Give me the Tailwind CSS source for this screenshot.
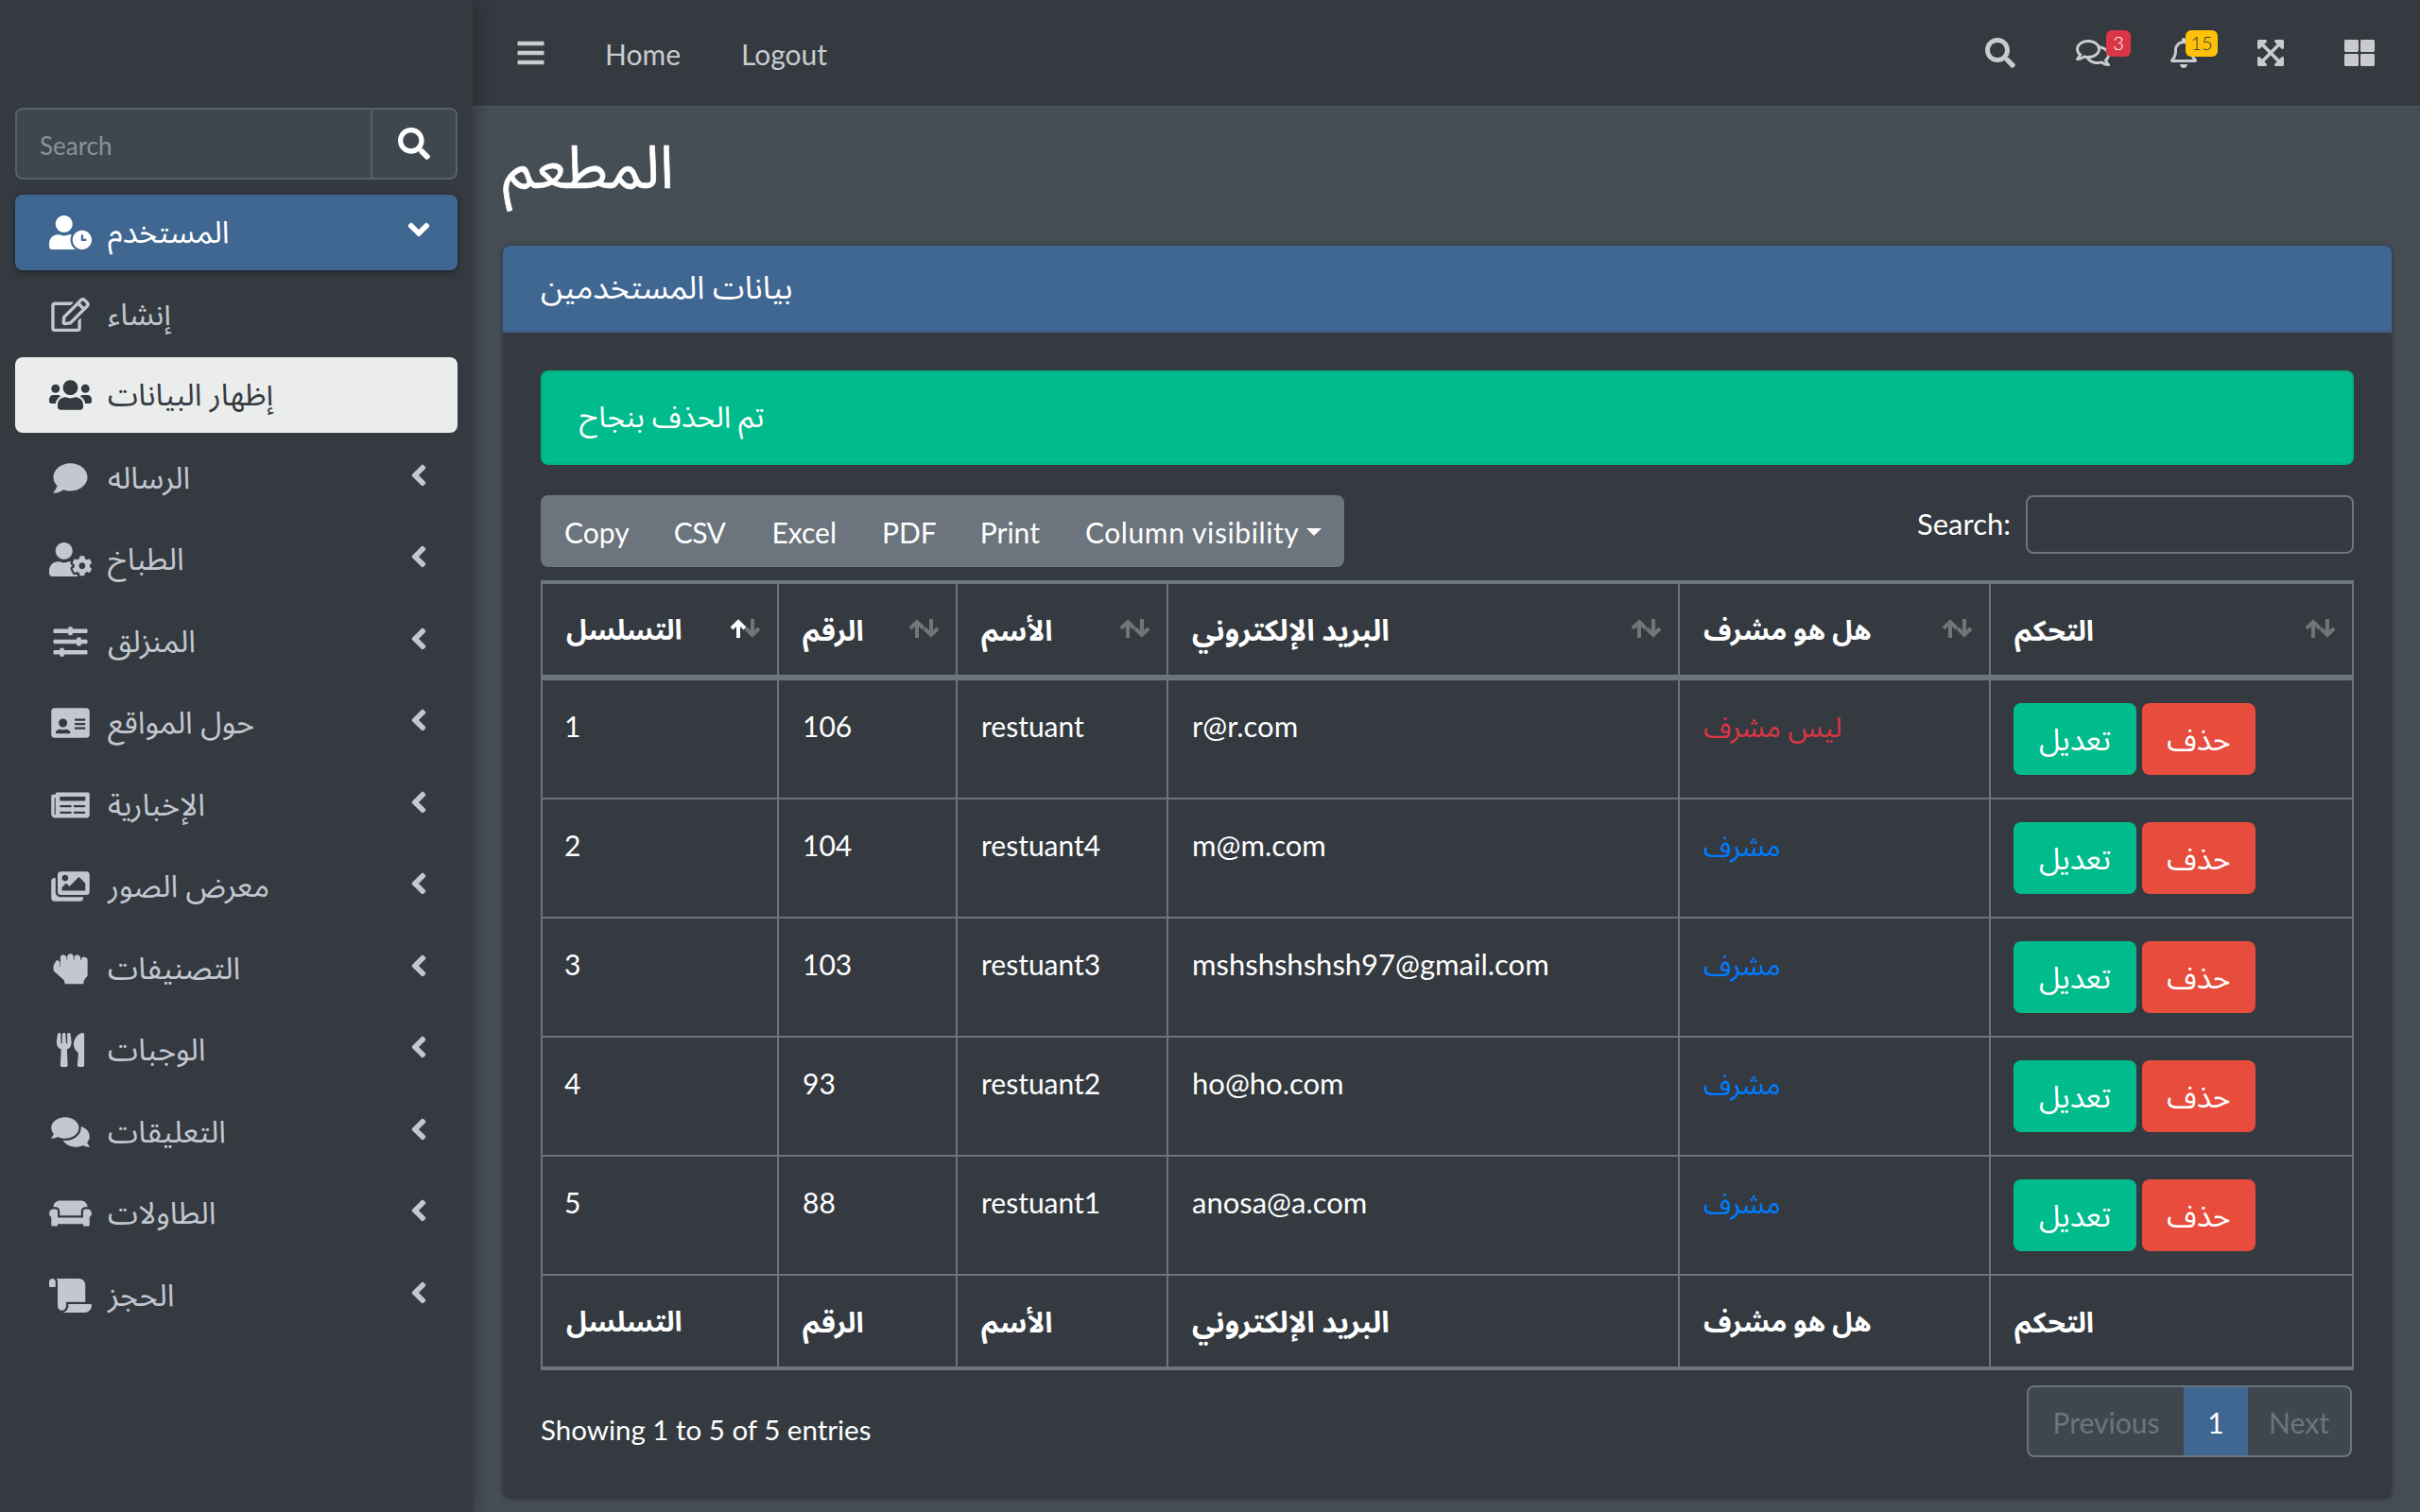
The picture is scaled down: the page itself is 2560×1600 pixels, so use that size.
<!DOCTYPE html>
<html lang="ar">
<head>
  <meta charset="UTF-8" />
  <title>المطعم</title>
  <script src="https://cdn.jsdelivr.net/npm/@tailwindcss/browser@4"></script>
</head>
<body class="w-[2560px] h-[1600px] overflow-hidden flex bg-[#454d55] text-white text-[30px] leading-[48px] font-['Lato','Noto_Sans_Arabic','DejaVu_Sans',sans-serif]">
  <svg class="hidden">
    <symbol id="i-search" viewBox="0 0 512 512"><path fill="currentColor" d="M505 442.7L405.3 343c-4.5-4.5-10.6-7-17-7H372c27.6-35.3 44-79.7 44-128C416 93.1 322.9 0 208 0S0 93.1 0 208s93.1 208 208 208c48.3 0 92.7-16.4 128-44v16.3c0 6.4 2.5 12.5 7 17l99.7 99.7c9.4 9.4 24.6 9.4 33.9 0l28.3-28.3c9.4-9.4 9.4-24.6.1-34zM208 336c-70.7 0-128-57.2-128-128 0-70.7 57.2-128 128-128 70.7 0 128 57.2 128 128 0 70.7-57.2 128-128 128z"/></symbol>
    <symbol id="i-angle" viewBox="0 0 256 512"><path fill="currentColor" d="M31.7 239l136-136c9.4-9.4 24.6-9.4 33.9 0l22.6 22.6c9.4 9.4 9.4 24.6 0 33.9L127.9 256l96.4 96.4c9.4 9.4 9.4 24.6 0 33.9L201.7 409c-9.4 9.4-24.6 9.4-33.9 0l-136-136c-9.5-9.4-9.5-24.6-.1-34z"/></symbol>
    <symbol id="i-sort" viewBox="0 0 34 20"><g fill="none" stroke="currentColor" stroke-width="4"><path d="M9 20V3M2 10l7-7 7 7"/><path d="M24 0v17M17 10l7 7 7-7"/></g></symbol>
  </svg>

  <!-- Sidebar -->
  <aside class="w-[500px] h-full shrink-0 bg-[#343a40] px-4 pt-[114px] text-[#c2c7d0] shadow-[0_0_20px_rgba(0,0,0,0.35)] z-10">
    <div class="flex h-[76px] rounded-lg border-2 border-[#56606a] bg-[#3f474e] mb-4 overflow-hidden">
      <div class="flex-1 pl-[24px] text-[26px] leading-[76px] text-[#8b9299]">Search</div>
      <div class="w-[90px] border-l-2 border-[#56606a] flex items-center justify-center text-white">
        <svg class="w-[34px] h-[34px]"><use href="#i-search"/></svg>
      </div>
    </div>
    <nav class="flex flex-col gap-[6.5px] text-[32.5px] [&_span]:-translate-y-[1px]">
      <a class="flex items-center h-[80px] px-[36px] rounded-lg bg-[#3f6791] text-white shadow-[0_2px_6px_rgba(0,0,0,0.4)]">
        <svg class="w-[45px] h-[36px] shrink-0" viewBox="0 0 640 512"><path fill="currentColor" d="M496 224c-79.6 0-144 64.4-144 144s64.4 144 144 144 144-64.4 144-144-64.4-144-144-144zm64 150.3c0 5.3-4.4 9.7-9.7 9.7h-60.6c-5.3 0-9.7-4.4-9.7-9.7v-76.6c0-5.3 4.4-9.7 9.7-9.7h12.6c5.3 0 9.7 4.4 9.7 9.7V352h38.3c5.3 0 9.7 4.4 9.7 9.7v12.6zM320 368c0-27.8 6.7-54.1 18.2-77.5-8-1.5-16.2-2.5-24.6-2.5h-16.7c-22.2 10.2-46.9 16-72.9 16s-50.6-5.8-72.9-16h-16.7C60.2 288 0 348.2 0 422.4V464c0 26.5 21.5 48 48 48h347.1c-45.3-31.9-75.1-84.5-75.1-144zm-96-112c70.7 0 128-57.3 128-128S294.7 0 224 0 96 57.3 96 128s57.3 128 128 128z"/></svg>
        <span class="ml-[17px]">المستخدم</span>
        <svg class="ml-auto -mr-[4px] w-[18px] h-[36px] -rotate-90 -translate-y-[3px]"><use href="#i-angle"/></svg>
      </a>
      <a class="flex items-center h-[80px] px-[36px]">
        <svg class="w-[45px] h-[36px] shrink-0" viewBox="0 0 576 512"><path fill="currentColor" d="M402.300 344.900l32-32c5-5 13.700-1.500 13.700 5.700V464c0 26.500-21.500 48-48 48H48c-26.500 0-48-21.500-48-48V112c0-26.500 21.500-48 48-48h273.500c7.100 0 10.700 8.600 5.700 13.700l-32 32c-1.500 1.500-3.500 2.300-5.700 2.300H48v352h352V350.500c0-2.100.8-4.100 2.300-5.600zm156.600-201.800L296.300 405.700l-90.400 10c-26.200 2.900-48.500-19.200-45.600-45.600l10-90.400L432.900 17.100c22.900-22.900 59.900-22.900 82.700 0l43.200 43.200c22.900 22.900 22.900 60 .1 82.800zM460.100 174L402 115.900 216.200 301.800l-7.300 65.300 65.300-7.300L460.100 174zm64.800-79.700l-43.200-43.200c-4.100-4.100-10.800-4.100-14.800 0L436 82l58.100 58.100 30.900-30.900c4-4.200 4-10.800-.1-14.900z"/></svg>
        <span class="ml-[17px]">إنشاء</span>
      </a>
      <a class="flex items-center h-[80px] px-[36px] rounded-lg bg-[#ebecec] text-[#343a40] -translate-y-[1px]">
        <svg class="w-[45px] h-[36px] shrink-0" viewBox="0 0 640 512"><path fill="currentColor" d="M96 224c35.3 0 64-28.7 64-64s-28.7-64-64-64-64 28.7-64 64 28.7 64 64 64zm448 0c35.3 0 64-28.7 64-64s-28.7-64-64-64-64 28.7-64 64 28.7 64 64 64zm32 32h-64c-17.6 0-33.5 7.1-45.1 18.6 40.3 22.1 68.9 62 75.1 109.4h66c17.7 0 32-14.3 32-32v-32c0-35.3-28.7-64-64-64zm-256 0c61.9 0 112-50.1 112-112S381.9 32 320 32 208 82.1 208 144s50.1 112 112 112zm76.8 32h-8.3c-20.8 10-43.9 16-68.5 16s-47.6-6-68.5-16h-8.3C179.6 288 128 339.6 128 403.2V432c0 26.5 21.5 48 48 48h288c26.5 0 48-21.5 48-48v-28.8c0-63.6-51.6-115.2-115.2-115.2zm-223.7-13.4C161.5 263.1 145.6 256 128 256H64c-35.3 0-64 28.7-64 64v32c0 17.7 14.3 32 32 32h65.9c6.3-47.4 34.9-87.3 75.2-109.4z"/></svg>
        <span class="ml-[17px]">إظهار البيانات</span>
      </a>
      <a class="flex items-center h-[80px] px-[36px]">
        <svg class="w-[45px] h-[36px] shrink-0" viewBox="0 0 512 512"><path fill="currentColor" d="M256 32C114.6 32 0 125.1 0 240c0 49.6 21.4 95 57 130.7C44.5 421.1 2.7 466 2.2 466.5c-2.2 2.3-2.8 5.7-1.5 8.7S4.8 480 8 480c66.3 0 116-31.8 140.6-51.4 32.7 12.3 69 19.4 107.4 19.4 141.4 0 256-93.1 256-208S397.4 32 256 32z"/></svg>
        <span class="ml-[17px]">الرساله</span>
        <svg class="ml-auto -mr-[4px] w-[18px] h-[36px] -translate-y-[3px]"><use href="#i-angle"/></svg>
      </a>
      <a class="flex items-center h-[80px] px-[36px]">
        <svg class="w-[45px] h-[36px] shrink-0" viewBox="0 0 640 512"><path fill="currentColor" d="M610.5 373.3c2.6-14.1 2.6-28.5 0-42.6l25.8-14.9c3-1.7 4.3-5.2 3.3-8.5-6.7-21.6-18.2-41.2-33.2-57.4-2.3-2.5-6-3.1-9-1.4l-25.8 14.9c-10.9-9.3-23.4-16.5-36.9-21.3v-29.8c0-3.4-2.4-6.4-5.7-7.1-22.3-5-45-4.8-66.2 0-3.3.7-5.7 3.7-5.7 7.1v29.8c-13.5 4.8-26 12-36.9 21.3l-25.8-14.9c-2.9-1.7-6.7-1.1-9 1.4-15 16.2-26.5 35.8-33.2 57.4-1 3.3.4 6.8 3.3 8.5l25.8 14.9c-2.6 14.1-2.6 28.5 0 42.6l-25.8 14.9c-3 1.7-4.3 5.2-3.3 8.5 6.7 21.6 18.2 41.1 33.2 57.4 2.3 2.5 6 3.1 9 1.4l25.8-14.9c10.9 9.3 23.4 16.5 36.9 21.3v29.8c0 3.4 2.4 6.4 5.7 7.1 22.3 5 45 4.8 66.2 0 3.3-.7 5.7-3.7 5.7-7.1v-29.8c13.5-4.8 26-12 36.9-21.3l25.8 14.9c2.9 1.7 6.7 1.1 9-1.4 15-16.2 26.5-35.8 33.2-57.4 1-3.3-.4-6.8-3.3-8.5l-25.8-14.9zM496 400.5c-26.8 0-48.5-21.8-48.5-48.5s21.8-48.5 48.5-48.5 48.5 21.8 48.5 48.5-21.7 48.5-48.5 48.5zM224 256c70.7 0 128-57.3 128-128S294.7 0 224 0 96 57.3 96 128s57.3 128 128 128zm201.2 226.5c-2.3-1.2-4.6-2.6-6.8-3.9l-7.9 4.6c-6 3.4-12.8 5.3-19.6 5.3-10.9 0-21.4-4.6-28.9-12.6-18.3-19.8-32.3-43.9-40.2-69.6-5.5-17.7 1.9-36.4 17.9-45.7l7.9-4.6c-.1-2.6-.1-5.2 0-7.8l-7.9-4.6c-16-9.2-23.4-28-17.9-45.7.9-2.9 2.2-5.8 3.2-8.7-3.8-.3-7.5-1.2-11.4-1.2h-16.7c-22.2 10.2-46.9 16-72.9 16s-50.6-5.8-72.9-16h-16.7C60.2 288 0 348.2 0 422.4V464c0 26.5 21.5 48 48 48h352c10.1 0 19.5-3.2 27.2-8.5-1.2-3.8-2-7.7-2-11.8v-9.2z"/></svg>
        <span class="ml-[17px]">الطباخ</span>
        <svg class="ml-auto -mr-[4px] w-[18px] h-[36px] -translate-y-[3px]"><use href="#i-angle"/></svg>
      </a>
      <a class="flex items-center h-[80px] px-[36px]">
        <svg class="w-[45px] h-[36px] shrink-0" viewBox="0 0 512 512"><path fill="currentColor" d="M496 384H160v-16c0-8.8-7.2-16-16-16h-32c-8.8 0-16 7.2-16 16v16H16c-8.8 0-16 7.2-16 16v32c0 8.8 7.2 16 16 16h80v16c0 8.8 7.2 16 16 16h32c8.8 0 16-7.2 16-16v-16h336c8.8 0 16-7.2 16-16v-32c0-8.8-7.2-16-16-16zm0-160h-80v-16c0-8.8-7.2-16-16-16h-32c-8.8 0-16 7.2-16 16v16H16c-8.8 0-16 7.2-16 16v32c0 8.8 7.2 16 16 16h336v16c0 8.8 7.2 16 16 16h32c8.8 0 16-7.2 16-16v-16h80c8.8 0 16-7.2 16-16v-32c0-8.8-7.2-16-16-16zm0-160H288V48c0-8.8-7.2-16-16-16h-32c-8.8 0-16 7.2-16 16v16H16C7.2 64 0 71.2 0 80v32c0 8.8 7.2 16 16 16h208v16c0 8.8 7.2 16 16 16h32c8.8 0 16-7.2 16-16v-16h208c8.8 0 16-7.2 16-16V80c0-8.8-7.2-16-16-16z"/></svg>
        <span class="ml-[17px]">المنزلق</span>
        <svg class="ml-auto -mr-[4px] w-[18px] h-[36px] -translate-y-[3px]"><use href="#i-angle"/></svg>
      </a>
      <a class="flex items-center h-[80px] px-[36px]">
        <svg class="w-[45px] h-[36px] shrink-0" viewBox="0 0 576 512"><path fill="currentColor" fill-rule="evenodd" d="M48 32h480c26.5 0 48 21.500 48 48v352c0 26.5-21.5 48-48 48H48c-26.5 0-48-21.5-48-48V80c0-26.500 21.500-48 48-48zM352 200c0-4.400 3.600-8 8-8h144c4.400 0 8 3.600 8 8v16c0 4.400-3.600 8-8 8H360c-4.400 0-8-3.600-8-8v-16zm0 64c0-4.400 3.600-8 8-8h144c4.400 0 8 3.600 8 8v16c0 4.400-3.600 8-8 8H360c-4.400 0-8-3.600-8-8v-16zm0 64c0-4.400 3.600-8 8-8h144c4.400 0 8 3.600 8 8v16c0 4.400-3.600 8-8 8H360c-4.400 0-8-3.600-8-8v-16zM176 192c35.300 0 64 28.700 64 64s-28.700 64-64 64-64-28.700-64-64 28.700-64 64-64zM67.100 396.200C75.500 370.500 99.600 352 128 352h8.200c12.300 5.100 25.700 8 39.800 8s27.600-2.900 39.800-8h8.200c28.400 0 52.500 18.500 60.900 44.200 3.200 9.900-5.200 19.800-15.600 19.800H82.700c-10.400 0-18.800-10-15.600-19.800z"/></svg>
        <span class="ml-[17px]">حول المواقع</span>
        <svg class="ml-auto -mr-[4px] w-[18px] h-[36px] -translate-y-[3px]"><use href="#i-angle"/></svg>
      </a>
      <a class="flex items-center h-[80px] px-[36px]">
        <svg class="w-[45px] h-[36px] shrink-0" viewBox="0 0 576 512"><path fill="currentColor" d="M552 64H88c-13.255 0-24 10.745-24 24v8H24c-13.255 0-24 10.745-24 24v272c0 30.928 25.072 56 56 56h472c26.51 0 48-21.49 48-48V88c0-13.255-10.745-24-24-24zM56 400a8 8 0 0 1-8-8V144h16v248a8 8 0 0 1-8 8zm236-16H140c-6.627 0-12-5.373-12-12v-8c0-6.627 5.373-12 12-12h152c6.627 0 12 5.373 12 12v8c0 6.627-5.373 12-12 12zm208 0H348c-6.627 0-12-5.373-12-12v-8c0-6.627 5.373-12 12-12h152c6.627 0 12 5.373 12 12v8c0 6.627-5.373 12-12 12zm-208-96H140c-6.627 0-12-5.373-12-12v-8c0-6.627 5.373-12 12-12h152c6.627 0 12 5.373 12 12v8c0 6.627-5.373 12-12 12zm208 0H348c-6.627 0-12-5.373-12-12v-8c0-6.627 5.373-12 12-12h152c6.627 0 12 5.373 12 12v8c0 6.627-5.373 12-12 12zm0-96H140c-6.627 0-12-5.373-12-12v-40c0-6.627 5.373-12 12-12h360c6.627 0 12 5.373 12 12v40c0 6.627-5.373 12-12 12z"/></svg>
        <span class="ml-[17px]">الإخبارية</span>
        <svg class="ml-auto -mr-[4px] w-[18px] h-[36px] -translate-y-[3px]"><use href="#i-angle"/></svg>
      </a>
      <a class="flex items-center h-[80px] px-[36px]">
        <svg class="w-[45px] h-[36px] shrink-0" viewBox="0 0 576 512"><path fill="currentColor" d="M480 416v16c0 26.51-21.49 48-48 48H48c-26.51 0-48-21.49-48-48V176c0-26.51 21.49-48 48-48h16v208c0 44.112 35.888 80 80 80h336zm96-80V80c0-26.51-21.49-48-48-48H144c-26.51 0-48 21.49-48 48v256c0 26.51 21.49 48 48 48h384c26.51 0 48-21.49 48-48zM256 128c0 26.51-21.49 48-48 48s-48-21.49-48-48 21.49-48 48-48 48 21.49 48 48zm-96 144l55.515-55.515c4.686-4.686 12.284-4.686 16.971 0L272 256l135.515-135.515c4.686-4.686 12.284-4.686 16.971 0L512 208v112H160v-48z"/></svg>
        <span class="ml-[17px]">معرض الصور</span>
        <svg class="ml-auto -mr-[4px] w-[18px] h-[36px] -translate-y-[3px]"><use href="#i-angle"/></svg>
      </a>
      <a class="flex items-center h-[80px] px-[36px]">
        <svg class="w-[45px] h-[36px] shrink-0" viewBox="0 0 512 512"><path fill="currentColor" d="M464.8 80c-26.9-.4-48.8 21.2-48.8 48h-8V96.8c0-26.300-20.900-48.300-47.200-48.800-26.900-.4-48.800 21.200-48.800 48v32h-8V80.800c0-26.300-20.900-48.300-47.200-48.800-26.900-.4-48.800 21.200-48.800 48v48h-8V96.800c0-26.300-20.900-48.300-47.200-48.800-26.900-.4-48.800 21.200-48.800 48v136l-8-7.100v-48.100c0-26.300-20.900-48.300-47.200-48.800C21.900 175.600 0 197.200 0 224v41.700c0 13.700 5.900 26.800 16.100 35.900l135.800 120.700C163.300 432.400 168 445 168 458v6c0 13.300 10.700 24 24 24h240c13.300 0 24-10.700 24-24v-8.300c0-12.900 4.600-25.400 12.800-35.400l34.500-42c7-8.600 10.700-19.400 10.700-30.500V128.800c0-26.300-20.900-48.300-47.200-48.800z"/></svg>
        <span class="ml-[17px]">التصنيفات</span>
        <svg class="ml-auto -mr-[4px] w-[18px] h-[36px] -translate-y-[3px]"><use href="#i-angle"/></svg>
      </a>
      <a class="flex items-center h-[80px] px-[36px]">
        <svg class="w-[45px] h-[36px] shrink-0" viewBox="0 0 416 512"><path fill="currentColor" d="M207.900 15.200c.8 4.700 16.100 94.500 16.100 128.800 0 52.300-27.800 89.600-68.900 104.600L168 486.700c.7 13.700-10.200 25.300-24 25.300H80c-13.700 0-24.700-11.500-24-25.300l12.900-238.100C27.700 233.600 0 196.200 0 144 0 109.600 15.300 19.900 16.100 15.200 19.300-5.100 61.400-5.400 64 16.300v141.200c1.300 3.400 15.100 3.200 16 0 1.400-25.300 7.900-139.200 8-141.800 3.300-20.800 44.700-20.800 47.900 0 .2 2.700 6.600 116.500 8 141.800.9 3.200 14.800 3.400 16 0V16.300c2.600-21.600 44.800-21.400 48-1.100zm119.200 285.700l-15 185.100c-1.200 14 9.900 26 23.900 26h56c13.300 0 24-10.700 24-24V24c0-13.200-10.700-24-24-24-82.500 0-221.400 178.500-64.900 300.900z"/></svg>
        <span class="ml-[17px]">الوجبات</span>
        <svg class="ml-auto -mr-[4px] w-[18px] h-[36px] -translate-y-[3px]"><use href="#i-angle"/></svg>
      </a>
      <a class="flex items-center h-[80px] px-[36px]">
        <svg class="w-[45px] h-[36px] shrink-0" viewBox="0 0 576 512"><path fill="currentColor" d="M416 192c0-88.400-93.100-160-208-160S0 103.600 0 192c0 34.300 14.100 65.900 38 92-13.400 30.200-35.500 54.200-35.800 54.500-2.200 2.300-2.800 5.700-1.500 8.700S4.800 352 8 352c36.600 0 66.900-12.300 88.700-25 32.200 15.700 70.300 25 111.300 25 114.900 0 208-71.600 208-160zm122 220c23.900-26 38-57.700 38-92 0-66.900-53.500-124.200-129.300-148.100.9 6.600 1.300 13.300 1.300 20.100 0 105.900-107.700 192-240 192-10.800 0-21.300-.8-31.700-1.900C207.800 439.600 281.800 480 368 480c41 0 79.100-9.200 111.300-25 21.800 12.700 52.100 25 88.700 25 3.200 0 6.100-1.900 7.300-4.800 1.300-2.900.7-6.300-1.500-8.700-.3-.3-22.400-24.200-35.800-54.500z"/></svg>
        <span class="ml-[17px]">التعليقات</span>
        <svg class="ml-auto -mr-[4px] w-[18px] h-[36px] -translate-y-[3px]"><use href="#i-angle"/></svg>
      </a>
      <a class="flex items-center h-[80px] px-[36px]">
        <svg class="w-[45px] h-[36px] shrink-0" viewBox="0 0 640 512"><path fill="currentColor" d="M160 224v64h320v-64c0-35.300 28.700-64 64-64h32c0-53-43-96-96-96H160c-53 0-96 43-96 96h32c35.300 0 64 28.700 64 64zm416-32h-32c-17.700 0-32 14.300-32 32v96H128v-96c0-17.700-14.300-32-32-32H64c-35.300 0-64 28.700-64 64 0 23.600 13 44 32 55.100V432c0 8.800 7.200 16 16 16h64c8.800 0 16-7.200 16-16v-16h384v16c0 8.800 7.200 16 16 16h64c8.800 0 16-7.200 16-16V311.100c19-11.100 32-31.500 32-55.100 0-35.300-28.700-64-64-64z"/></svg>
        <span class="ml-[17px]">الطاولات</span>
        <svg class="ml-auto -mr-[4px] w-[18px] h-[36px] -translate-y-[3px]"><use href="#i-angle"/></svg>
      </a>
      <a class="flex items-center h-[80px] px-[36px]">
        <svg class="w-[45px] h-[36px] shrink-0" viewBox="0 0 640 512"><path fill="currentColor" d="M48 0C21.530 0 0 21.530 0 48v64c0 8.840 7.160 16 16 16h80V48C96 21.530 74.470 0 48 0zm208 412.570V352h288V96c0-52.940-43.060-96-96-96H111.590C121.740 13.410 128 29.920 128 48v368c0 38.870 34.650 69.650 74.750 63.120C234.220 474 256 445.040 256 413.100zM288 384v32c0 52.930-43.060 96-96 96h336c61.860 0 112-50.140 112-112 0-8.840-7.160-16-16-16H288z"/></svg>
        <span class="ml-[17px]">الحجز</span>
        <svg class="ml-auto -mr-[4px] w-[18px] h-[36px] -translate-y-[3px]"><use href="#i-angle"/></svg>
      </a>
    </nav>
  </aside>

  <div class="flex-1 flex flex-col min-w-0">
    <!-- Top navbar -->
    <header class="h-[114px] shrink-0 flex items-center bg-[#343a40] border-b-2 border-[#4b545c] pl-[47px] pr-[48px] text-[#c9cbce]">
      <svg class="w-[29px] h-[32px]" viewBox="0 0 448 512"><path fill="currentColor" d="M16 132h416c8.837 0 16-7.163 16-16V76c0-8.837-7.163-16-16-16H16C7.163 60 0 67.163 0 76v40c0 8.837 7.163 16 16 16zm0 160h416c8.837 0 16-7.163 16-16v-40c0-8.837-7.163-16-16-16H16c-8.837 0-16 7.163-16 16v40c0 8.837 7.163 16 16 16zm0 160h416c8.837 0 16-7.163 16-16v-40c0-8.837-7.163-16-16-16H16c-8.837 0-16 7.163-16 16v40c0 8.837 7.163 16 16 16z"/></svg>
      <a class="ml-[64px] pt-[2px]">Home</a>
      <a class="ml-[64px] pt-[2px]">Logout</a>
      <div class="ml-auto flex items-center">
        <svg class="w-[32px] h-[32px]"><use href="#i-search"/></svg>
        <div class="relative ml-[64px]">
          <svg class="block w-[36px] h-[32px]" viewBox="0 0 576 512"><path fill="currentColor" d="M532 386.200c27.500-27.100 44-61.100 44-98.200 0-80-76.500-146.100-176.200-157.900C368.300 72.500 294.300 32 208 32 93.100 32 0 103.600 0 192c0 37 16.500 71 44 98.200-15.300 30.700-37.300 54.500-37.700 54.900-6.300 6.700-8.100 16.500-4.400 25 3.600 8.500 12 14 21.200 14 53.500 0 96.700-20.200 125.200-38.800 9.200 2.100 18.700 3.700 28.400 4.900C208.100 407.600 281.800 448 368 448c20.800 0 40.800-2.400 59.800-6.800C456.300 459.700 499.400 480 553 480c9.200 0 17.500-5.500 21.200-14 3.600-8.500 1.900-18.300-4.400-25-.4-.3-22.500-24.100-37.800-54.800zm-392.800-92.300L122.100 305c-14.100 9.100-28.500 16.300-43.100 21.400 2.700-4.700 5.400-9.700 8-14.800l15.500-31.100L77.700 256C64.200 242.600 48 220.700 48 192c0-60.700 73.300-112 160-112s160 51.300 160 112-73.300 112-160 112c-16.500 0-33-1.900-49-5.600l-19.800-4.500zM498.300 352l-24.700 24.400 15.500 31.100c2.600 5.100 5.300 10.100 8 14.800-14.600-5.100-29-12.300-43.100-21.400l-17.100-11.100-19.900 4.600c-16 3.700-32.500 5.600-49 5.600-54 0-102.200-20.100-131.300-49.700C338 339.500 416 272.900 416 192c0-3.400-.4-6.700-.7-10C479.700 196.500 528 238.800 528 288c0 28.700-16.200 50.600-29.700 64z"/></svg>
          <span class="absolute left-[32px] -top-[8px] w-[26px] h-[28px] rounded-md bg-[#dc3545] text-white text-[20px] font-light leading-[26px] text-center">3</span>
        </div>
        <div class="relative ml-[64px]">
          <svg class="block w-[28px] h-[32px]" viewBox="0 0 448 512"><path fill="currentColor" d="M439.390 362.290c-19.320-20.760-55.470-51.990-55.470-154.290 0-77.700-54.480-139.900-127.940-155.160V32c0-17.670-14.320-32-31.980-32s-31.980 14.330-31.980 32v20.840C118.560 68.100 64.080 130.300 64.080 208c0 102.300-36.150 133.530-55.470 154.290-6 6.450-8.660 14.160-8.610 21.710.11 16.400 12.980 32 32.100 32h383.800c19.120 0 32-15.600 32.100-32 .05-7.550-2.610-15.270-8.610-21.710zM67.530 368c21.220-27.970 44.420-74.330 44.530-159.420 0-.2-.06-.38-.06-.58 0-61.860 50.140-112 112-112s112 50.140 112 112c0 .2-.06.38-.06.58.11 85.100 23.310 131.460 44.530 159.420H67.530zM224 512c35.320 0 63.970-28.650 63.970-64H160.030c0 35.350 28.650 64 63.970 64z"/></svg>
          <span class="absolute left-[16px] -top-[8px] w-[34px] h-[28px] rounded-md bg-[#ffc107] text-[#343a40] text-[20px] font-light leading-[26px] text-center">15</span>
        </div>
        <svg class="ml-[64px] w-[28px] h-[32px]" viewBox="0 0 448 512"><path fill="currentColor" d="M448 344v112a23.940 23.940 0 0 1-24 24H312c-21.390 0-32.090-25.900-17-41l36.200-36.200L224 295.600 116.770 402.900 153 439c15.090 15.100 4.390 41-17 41H24a23.940 23.940 0 0 1-24-24V344c0-21.400 25.890-32.100 41-17l36.190 36.200L184.460 256 77.180 148.700 41 185c-15.100 15.100-41 4.400-41-17V56a23.940 23.940 0 0 1 24-24h112c21.390 0 32.090 25.900 17 41l-36.200 36.200L224 216.400l107.230-107.300L295 73c-15.090-15.100-4.390-41 17-41h112a23.940 23.940 0 0 1 24 24v112c0 21.400-25.890 32.100-41 17l-36.190-36.200L263.540 256l107.280 107.300L407 327.100c15.100-15.200 41-4.500 41 16.900z"/></svg>
        <svg class="ml-[64px] w-[32px] h-[32px]" viewBox="0 0 512 512"><path fill="currentColor" d="M296 32h192c13.255 0 24 10.745 24 24v160c0 13.255-10.745 24-24 24H296c-13.255 0-24-10.745-24-24V56c0-13.255 10.745-24 24-24zm-80 0H24C10.745 32 0 42.745 0 56v160c0 13.255 10.745 24 24 24h192c13.255 0 24-10.745 24-24V56c0-13.255-10.745-24-24-24zM0 296v160c0 13.255 10.745 24 24 24h192c13.255 0 24-10.745 24-24V296c0-13.255-10.745-24-24-24H24c-13.255 0-24 10.745-24 24zm296 184h192c13.255 0 24-10.745 24-24V296c0-13.255-10.745-24-24-24H296c-13.255 0-24 10.745-24 24v160c0 13.255 10.745 24 24 24z"/></svg>
      </div>
    </header>

    <main class="flex-1 px-[30px] pt-[26px]">
      <h1 class="text-[63px] leading-[70px] h-[120px] font-normal pl-[2px] [-webkit-text-stroke:0.6px_white]">المطعم</h1>
      <section class="ml-[2px] h-[1326px] rounded-lg bg-[#343a40] shadow-[0_0_6px_rgba(0,0,0,0.3)] overflow-hidden">
        <div class="h-[92px] bg-[#3f6791] border-b-2 border-[#3a5d84] px-[40px] text-[34px] leading-[86px]">بيانات المستخدمين</div>
        <div class="px-[40px] pt-[40px]">
          <div class="h-[100px] rounded-lg bg-[#00bc8c] border-2 border-[#00b184] px-[39px] text-[31.5px] leading-[93px]">تم الحذف بنجاح</div>
          <div class="flex justify-between mt-[32px] h-[90px]">
            <div class="flex h-[76px] items-center rounded-lg bg-[#6c757d] pl-[25px] pr-[24px] pt-[2px] gap-[48px]">
              <span>Copy</span><span class="-ml-[1px] mr-[1px] tracking-[-0.5px]">CSV</span><span>Excel</span><span>PDF</span><span class="-ml-[2px]">Print</span>
              <span class="flex items-center gap-[8px]"><span class="tracking-[0.6px]">Column visibility</span><i class="border-x-[8px] border-t-[8px] border-x-transparent border-t-white"></i></span>
            </div>
            <div class="flex h-[62px] items-center">
              <span class="mr-[16px] -mt-[2px] text-[31px]">Search:</span>
              <div class="w-[347px] h-[62px] rounded-lg border-2 border-[#6c757d]"></div>
            </div>
          </div>
          <table class="table-fixed w-[1918px] border-separate border-spacing-0">
            <colgroup>
              <col class="w-[252px]"/><col class="w-[189px]"/><col class="w-[223px]"/><col class="w-[541px]"/><col class="w-[329px]"/><col class="w-[384px]"/>
            </colgroup>
            <thead>
              <tr class="text-left">
                <th class="relative h-[106px] p-[22px] pl-[25px] border-t-4 border-l-2 border-r-2 border-b-[6px] border-[#6c757d] font-bold text-[29.5px]">التسلسل<svg class="absolute right-[16px] top-[37px] w-[34px] h-[20px] text-white" viewBox="0 0 34 20"><path d="M9 20V3M2 10l7-7 7 7" fill="none" stroke="currentColor" stroke-width="4"/></svg><svg class="absolute right-[16px] top-[37px] w-[34px] h-[20px] text-white/30" viewBox="0 0 34 20"><path d="M24 0v17M17 10l7 7 7-7" fill="none" stroke="currentColor" stroke-width="4"/></svg></th>
                <th class="relative p-[22px] pl-[25px] border-t-4 border-r-2 border-b-[6px] border-[#6c757d] font-bold text-[30px]">الرقم<svg class="absolute right-[16px] top-[37px] w-[34px] h-[20px] text-white/30"><use href="#i-sort"/></svg></th>
                <th class="relative p-[22px] pl-[25px] border-t-4 border-r-2 border-b-[6px] border-[#6c757d] font-bold text-[30px]">الأسم<svg class="absolute right-[16px] top-[37px] w-[34px] h-[20px] text-white/30"><use href="#i-sort"/></svg></th>
                <th class="relative p-[22px] pl-[25px] border-t-4 border-r-2 border-b-[6px] border-[#6c757d] font-bold text-[31px]">البريد الإلكتروني<svg class="absolute right-[16px] top-[37px] w-[34px] h-[20px] text-white/30"><use href="#i-sort"/></svg></th>
                <th class="relative p-[22px] pl-[25px] border-t-4 border-r-2 border-b-[6px] border-[#6c757d] font-bold text-[29px]">هل هو مشرف<svg class="absolute right-[16px] top-[37px] w-[34px] h-[20px] text-white/30"><use href="#i-sort"/></svg></th>
                <th class="relative p-[22px] pl-[25px] border-t-4 border-r-2 border-b-[6px] border-[#6c757d] font-bold text-[30px]">التحكم<svg class="absolute right-[16px] top-[37px] w-[34px] h-[20px] text-white/30"><use href="#i-sort"/></svg></th>
              </tr>
            </thead>
            <tbody class="[&_td]:align-top [&_td]:p-[24px] [&_td]:pl-[25px] [&_td]:border-r-2 [&_td]:border-b-2 [&_td]:border-[#6c757d] [&_a]:text-[32px]">
              <tr>
                <td class="border-l-2 -indent-[2px]">1</td><td>106</td><td>restuant</td><td class="text-[31px]">r@r.com</td><td class="text-[#dc3545]">ليس مشرف</td>
                <td><div class="flex gap-[6px] h-[76px] -ml-[1px]"><a class="w-[130px] rounded-lg bg-[#00bc8c] text-center leading-[76px]">تعديل</a><a class="w-[120px] rounded-lg bg-[#e74c3c] text-center leading-[76px]">حذف</a></div></td>
              </tr>
              <tr>
                <td class="border-l-2 -indent-[2px]">2</td><td>104</td><td>restuant4</td><td class="text-[31px]">m@m.com</td><td class="text-[#007bff]">مشرف</td>
                <td><div class="flex gap-[6px] h-[76px] -ml-[1px]"><a class="w-[130px] rounded-lg bg-[#00bc8c] text-center leading-[76px]">تعديل</a><a class="w-[120px] rounded-lg bg-[#e74c3c] text-center leading-[76px]">حذف</a></div></td>
              </tr>
              <tr>
                <td class="border-l-2 -indent-[2px]">3</td><td>103</td><td>restuant3</td><td class="text-[31px]">mshshshshsh97@gmail.com</td><td class="text-[#007bff]">مشرف</td>
                <td><div class="flex gap-[6px] h-[76px] -ml-[1px]"><a class="w-[130px] rounded-lg bg-[#00bc8c] text-center leading-[76px]">تعديل</a><a class="w-[120px] rounded-lg bg-[#e74c3c] text-center leading-[76px]">حذف</a></div></td>
              </tr>
              <tr>
                <td class="border-l-2 -indent-[2px]">4</td><td>93</td><td>restuant2</td><td class="text-[31px]">ho@ho.com</td><td class="text-[#007bff]">مشرف</td>
                <td><div class="flex gap-[6px] h-[76px] -ml-[1px]"><a class="w-[130px] rounded-lg bg-[#00bc8c] text-center leading-[76px]">تعديل</a><a class="w-[120px] rounded-lg bg-[#e74c3c] text-center leading-[76px]">حذف</a></div></td>
              </tr>
              <tr>
                <td class="border-l-2 -indent-[2px]">5</td><td>88</td><td>restuant1</td><td class="text-[31px]">anosa@a.com</td><td class="text-[#007bff]">مشرف</td>
                <td><div class="flex gap-[6px] h-[76px] -ml-[1px]"><a class="w-[130px] rounded-lg bg-[#00bc8c] text-center leading-[76px]">تعديل</a><a class="w-[120px] rounded-lg bg-[#e74c3c] text-center leading-[76px]">حذف</a></div></td>
              </tr>
            </tbody>
            <tfoot>
              <tr class="text-left">
                <th class="h-[100px] p-[22px] pl-[25px] border-l-2 border-r-2 border-b-4 border-[#6c757d] font-bold text-[29.5px]">التسلسل</th>
                <th class="p-[22px] pl-[25px] border-r-2 border-b-4 border-[#6c757d] font-bold text-[30px]">الرقم</th>
                <th class="p-[22px] pl-[25px] border-r-2 border-b-4 border-[#6c757d] font-bold text-[30px]">الأسم</th>
                <th class="p-[22px] pl-[25px] border-r-2 border-b-4 border-[#6c757d] font-bold text-[31px]">البريد الإلكتروني</th>
                <th class="p-[22px] pl-[25px] border-r-2 border-b-4 border-[#6c757d] font-bold text-[29px]">هل هو مشرف</th>
                <th class="p-[22px] pl-[25px] border-r-2 border-b-4 border-[#6c757d] font-bold text-[30px]">التحكم</th>
              </tr>
            </tfoot>
          </table>
          <div class="flex justify-between mt-[16px]">
            <span class="mt-[23px] text-[29.5px]">Showing 1 to 5 of 5 entries</span>
            <div class="flex h-[76px] mr-[2px] rounded-lg border-2 border-[#6c757d] bg-[#3f474e] text-[#6c757d] overflow-hidden">
              <span class="w-[164px] text-center leading-[74px]">Previous</span>
              <span class="w-[68px] -my-[2px] bg-[#3f6791] text-white text-center leading-[78px]">1</span>
              <span class="w-[108px] text-center leading-[74px]">Next</span>
            </div>
          </div>
        </div>
      </section>
    </main>
  </div>
</body>
</html>
